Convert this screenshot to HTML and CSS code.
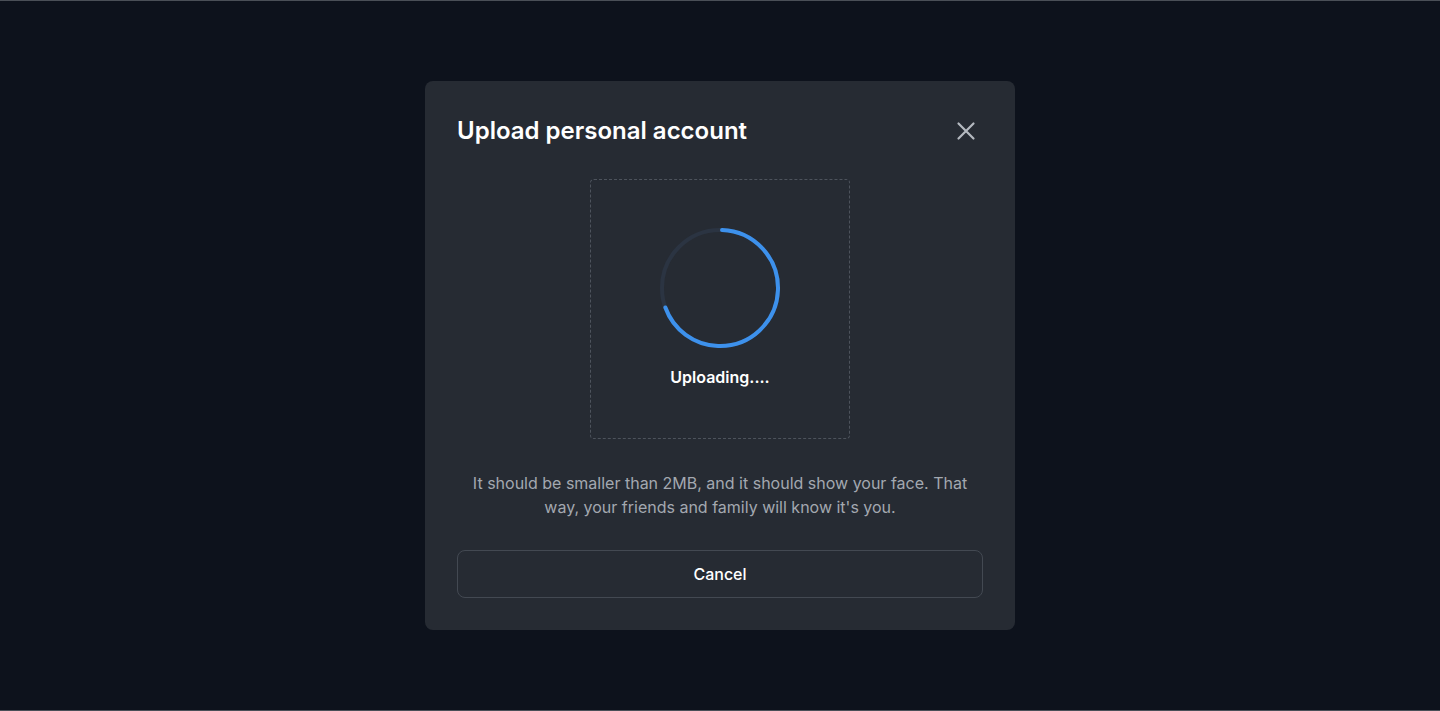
FILE: index.html
```html
<!DOCTYPE html>
<html lang="en">
<head>
<meta charset="utf-8">
<title>Upload personal account</title>
<link rel="stylesheet" href="styles.css">
</head>
<body>
<div class="page">
  <div class="modal">
    <div class="modal-header">
      <h2 class="modal-title">Upload personal account</h2>
      <button class="close-btn" aria-label="Close">
        <svg width="24" height="24" viewBox="0 0 24 24" fill="none" stroke="currentColor" stroke-width="2.2" stroke-linecap="round"><path d="M4.5 4.5l15 15M19.5 4.5l-15 15"/></svg>
      </button>
    </div>
    <div class="dropzone">
      <svg class="spinner" width="124" height="124" viewBox="0 0 124 124">
        <circle class="track" cx="62" cy="62" r="58" fill="none" stroke-width="4"/>
        <circle class="arc" cx="62" cy="62" r="58" fill="none" stroke-width="4" stroke-linecap="round" stroke-dasharray="251 365" transform="rotate(-88 62 62)"/>
      </svg>
      <div class="status">Uploading....</div>
    </div>
    <p class="hint">It should be smaller than 2MB, and it should show your face. That way, your friends and family will know it's you.</p>
    <button class="cancel-btn">Cancel</button>
  </div>
</div>
</body>
</html>
```
FILE: styles.css
```css
* { box-sizing: border-box; }
html, body { margin: 0; padding: 0; }
body {
  background: #0d121c;
  font-family: Inter, "Noto Sans", sans-serif;
  color: #fff;
}
.page {
  height: 711px;
  border-top: 1px solid #4a4f57;
  border-bottom: 1px solid #4a4f57;
  display: flex;
  justify-content: center;
  align-items: flex-start;
  padding-top: 80px;
}
.modal {
  width: 590px;
  background: #262b33;
  border-radius: 8px;
  padding: 32px;
  display: flex;
  flex-direction: column;
  align-items: center;
}
.modal-header {
  width: 100%;
  display: flex;
  justify-content: space-between;
  align-items: center;
  height: 32px;
  margin-top: 2px;
  margin-bottom: 32px;
}
.modal-title {
  margin: 0;
  font-size: 24px;
  font-weight: 600;
  line-height: 32px;
}
.close-btn {
  background: none;
  border: 0;
  padding: 0;
  width: 24px;
  height: 24px;
  color: #b4b9c0;
  margin-right: 5px;
  display: flex;
}
.dropzone {
  width: 260px;
  height: 260px;
  border: 1px dashed #4d535c;
  border-radius: 4px;
  display: flex;
  flex-direction: column;
  align-items: center;
  justify-content: center;
  gap: 15px;
  padding-bottom: 3px;
}
.spinner .track { stroke: #2b3442; }
.spinner .arc { stroke: #3d91ec; }
.status {
  font-size: 16px;
  font-weight: 600;
  line-height: 24px;
}
.hint {
  margin: 32px 0 0;
  width: 500px;
  text-align: center;
  font-size: 16px;
  line-height: 24px;
  color: #a3a8b0;
}
.cancel-btn {
  margin-top: 31px;
  width: 100%;
  height: 48px;
  background: transparent;
  border: 1px solid #434952;
  border-radius: 8px;
  color: #fff;
  font-family: inherit;
  font-size: 16px;
  font-weight: 500;
}
```
